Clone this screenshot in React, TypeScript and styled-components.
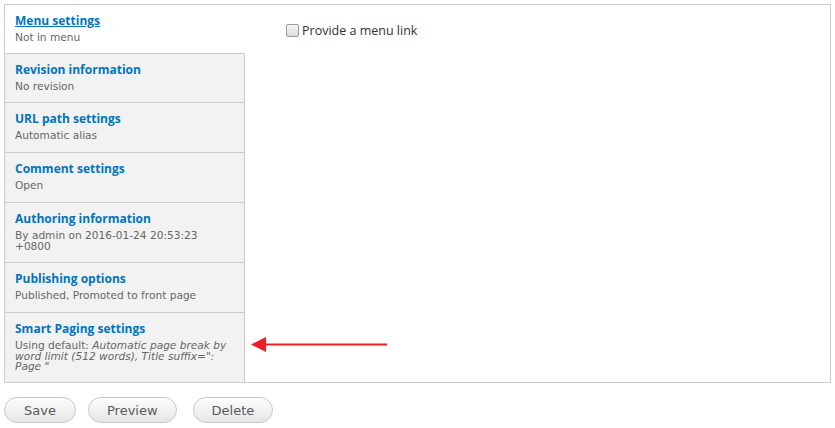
import React from "react";
import styled, { createGlobalStyle } from "styled-components";

const Global = createGlobalStyle`
  html, body { margin: 0; padding: 0; background: #fff; }
  body { font-family: "Open Sans", "DejaVu Sans", sans-serif; color: #333; }
`;

const Page = styled.div`
  position: relative;
  padding: 4px 4px 0 4px;
  width: 827px;
`;

const Tabs = styled.div`
  display: flex;
  border: 1px solid #ccc;
`;

const TabList = styled.ul`
  list-style: none;
  margin: 0;
  padding: 0;
  width: 240px;
  flex: none;
  background: #f2f2f2;
`;

const Tab = styled.li<{ $selected?: boolean }>`
  padding: 8px 10px ${(p) => (p.$selected ? 10 : 11)}px 10px;
  border-bottom: 1px solid #ccc;
  border-right: ${(p) => (p.$selected ? "1px solid #fff" : "1px solid #ccc")};
  background: ${(p) => (p.$selected ? "#fff" : "#f2f2f2")};
  &:last-child { border-bottom: none; padding-bottom: 10px; }
`;

const TabTitle = styled.a<{ $selected?: boolean }>`
  display: block;
  font-weight: 700;
  font-size: 12px;
  line-height: 16px;
  color: #0074bd;
  text-decoration: ${(p) => (p.$selected ? "underline" : "none")};
  margin-bottom: 3px;
`;

const TabDesc = styled.div`
  font-family: "DejaVu Sans", sans-serif;
  font-size: 10.6px;
  line-height: 10.7px;
  color: #666;
  em { font-style: italic; }
`;

const Pane = styled.div`
  flex: 1;
  background: #fff;
  padding: 17px 0 0 41px;
`;

const CheckRow = styled.label`
  display: flex;
  align-items: center;
  gap: 3px;
  font-size: 12.5px;
  color: #333;
`;

const Box = styled.span`
  width: 11px;
  height: 11px;
  border: 1px solid #9a9a9a;
  border-radius: 2px;
  background: linear-gradient(#f6f6f6, #dedede);
`;

const Actions = styled.div`
  display: flex;
  gap: 12px;
  padding-top: 14px;
`;

const Button = styled.button<{ $gap?: number }>`
  font-family: "DejaVu Sans", sans-serif;
  font-size: 13px;
  color: #5a5a5a;
  height: 26px;
  min-width: 72px;
  padding: 0 18px;
  border: 1px solid #c8c8c8;
  border-radius: 20px;
  background: linear-gradient(#fdfdfd, #e6e6e6);
  margin-left: ${(p) => p.$gap ?? 0}px;
`;

const Arrow = styled.svg`
  position: absolute;
  left: 250px;
  top: 336px;
`;

const tabs = [
  { t: "Menu settings", d: <>Not in menu</>, sel: true },
  { t: "Revision information", d: <>No revision</> },
  { t: "URL path settings", d: <>Automatic alias</> },
  { t: "Comment settings", d: <>Open</> },
  { t: "Authoring information", d: <>By admin on 2016-01-24 20:53:23 +0800</> },
  { t: "Publishing options", d: <>Published, Promoted to front page</> },
  {
    t: "Smart Paging settings",
    d: (
      <>
        Using default: <em>Automatic page break by word limit (512 words), Title suffix=": Page "</em>
      </>
    ),
  },
];

export default function App() {
  return (
    <Page>
      <Global />
      <Tabs>
        <TabList>
          {tabs.map((x) => (
            <Tab key={x.t} $selected={x.sel}>
              <TabTitle $selected={x.sel}>{x.t}</TabTitle>
              <TabDesc>{x.d}</TabDesc>
            </Tab>
          ))}
        </TabList>
        <Pane>
          <CheckRow>
            <Box />
            Provide a menu link
          </CheckRow>
        </Pane>
      </Tabs>
      <Actions>
        <Button>Save</Button>
        <Button>Preview</Button>
        <Button $gap={4}>Delete</Button>
      </Actions>
      <Arrow width="140" height="18" viewBox="0 0 140 18">
        <path d="M1 8.5 L16 1 L16 16 Z" fill="#e81f27" />
        <line x1="15" y1="8.5" x2="137" y2="8.5" stroke="#e81f27" strokeWidth="2" />
      </Arrow>
    </Page>
  );
}
